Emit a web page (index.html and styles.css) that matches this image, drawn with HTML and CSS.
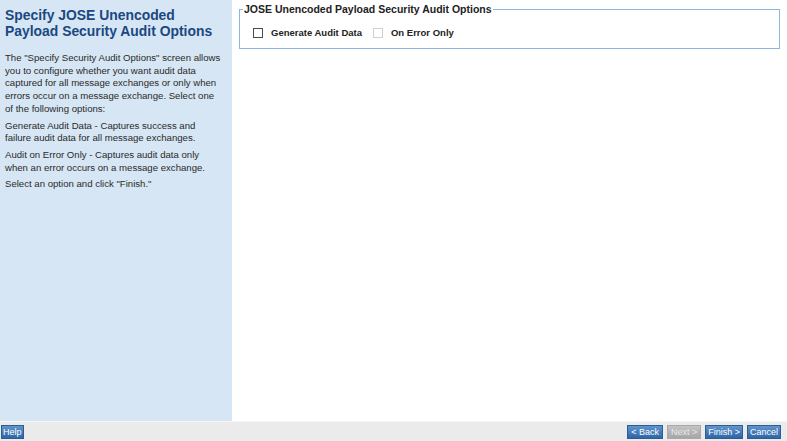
FILE: index.html
```html
<!DOCTYPE html>
<html>
<head>
<meta charset="utf-8">
<link rel="stylesheet" href="styles.css">
</head>
<body>
<div class="page">
  <div class="main">
    <aside class="sidebar">
      <h1 class="title">Specify JOSE Unencoded Payload Security Audit Options</h1>
      <p class="para">The "Specify Security Audit Options" screen allows you to configure whether you want audit data captured for all message exchanges or only when errors occur on a message exchange. Select one of the following options:</p>
      <p class="para">Generate Audit Data - Captures success and failure audit data for all message exchanges.</p>
      <p class="para">Audit on Error Only - Captures audit data only when an error occurs on a message exchange.</p>
      <p class="para">Select an option and click "Finish."</p>
    </aside>
    <section class="content">
      <fieldset class="group">
        <legend class="legend">JOSE Unencoded Payload Security Audit Options</legend>
        <div class="options">
          <label class="opt"><span class="box"></span><span class="opt-label">Generate Audit Data</span></label>
          <label class="opt"><span class="box box-disabled"></span><span class="opt-label">On Error Only</span></label>
        </div>
      </fieldset>
    </section>
  </div>
  <footer class="footer">
    <button class="btn btn-help">Help</button>
    <div class="nav">
      <button class="btn btn-wide">&lt; Back</button>
      <button class="btn btn-wide btn-disabled">Next &gt;</button>
      <button class="btn">Finish &gt;</button>
      <button class="btn">Cancel</button>
    </div>
  </footer>
</div>
</body>
</html>
```

FILE: styles.css
```css
html, body {
  margin: 0;
  padding: 0;
  background: #ffffff;
  font-family: "Liberation Sans", Arial, sans-serif;
}

.page {
  width: 787px;
  height: 441px;
  display: flex;
  flex-direction: column;
}

.main {
  flex: 1;
  display: flex;
  min-height: 0;
}

.sidebar {
  width: 232px;
  flex: none;
  background: #d6e6f4;
  padding: 7px 9px 0 5px;
  box-sizing: border-box;
}

.title {
  margin: 0 0 13px 0;
  font-size: 13.9px;
  line-height: 16px;
  font-weight: bold;
  color: #1b4882;
}

.para {
  margin: 0 0 4px 0;
  font-size: 9.6px;
  line-height: 12.7px;
  color: #2a2a2a;
}

.content {
  flex: 1;
  padding: 3px 7px 0 7px;
}

.group {
  margin: 0;
  padding: 0 6px 10px 13px;
  border: 1px solid #8db6df;
}

.legend {
  padding: 0 1px;
  margin-left: -10px;
  font-size: 10.5px;
  line-height: 12px;
  font-weight: bold;
  color: #222222;
}

.options {
  display: flex;
  align-items: center;
  gap: 11px;
  padding-top: 12px;
}

.opt {
  display: flex;
  align-items: center;
  gap: 8px;
  font-size: 9.5px;
  line-height: 11px;
  font-weight: bold;
  color: #222222;
}

.box {
  width: 8px;
  height: 8px;
  border: 1px solid #4a4a4a;
  background: #ffffff;
  display: inline-block;
}

.box-disabled {
  border-color: #d0d0d0;
}

.footer {
  height: 20px;
  flex: none;
  background: #ebebeb;
  border-top: 1px solid #f6f6f6;
  box-sizing: border-box;
  display: flex;
  align-items: center;
  justify-content: space-between;
  padding: 0 6px 0 1px;
}

.nav {
  display: flex;
  gap: 4px;
}

.btn {
  height: 14px;
  padding: 0 2px;
  margin: 0;
  border: 1px solid #2b5d97;
  background: linear-gradient(#5f94cc, #2f66a6);
  color: #ffffff;
  font-family: "Liberation Sans", Arial, sans-serif;
  font-size: 9px;
  line-height: 12px;
  cursor: pointer;
}

.btn-help {
  padding: 0 1px;
}

.btn-wide {
  padding: 0 3px;
}

.btn-disabled {
  border-color: #a9a9a9;
  background: linear-gradient(#c4c4c4, #a6a6a6);
  color: #e8e8e8;
}
```
